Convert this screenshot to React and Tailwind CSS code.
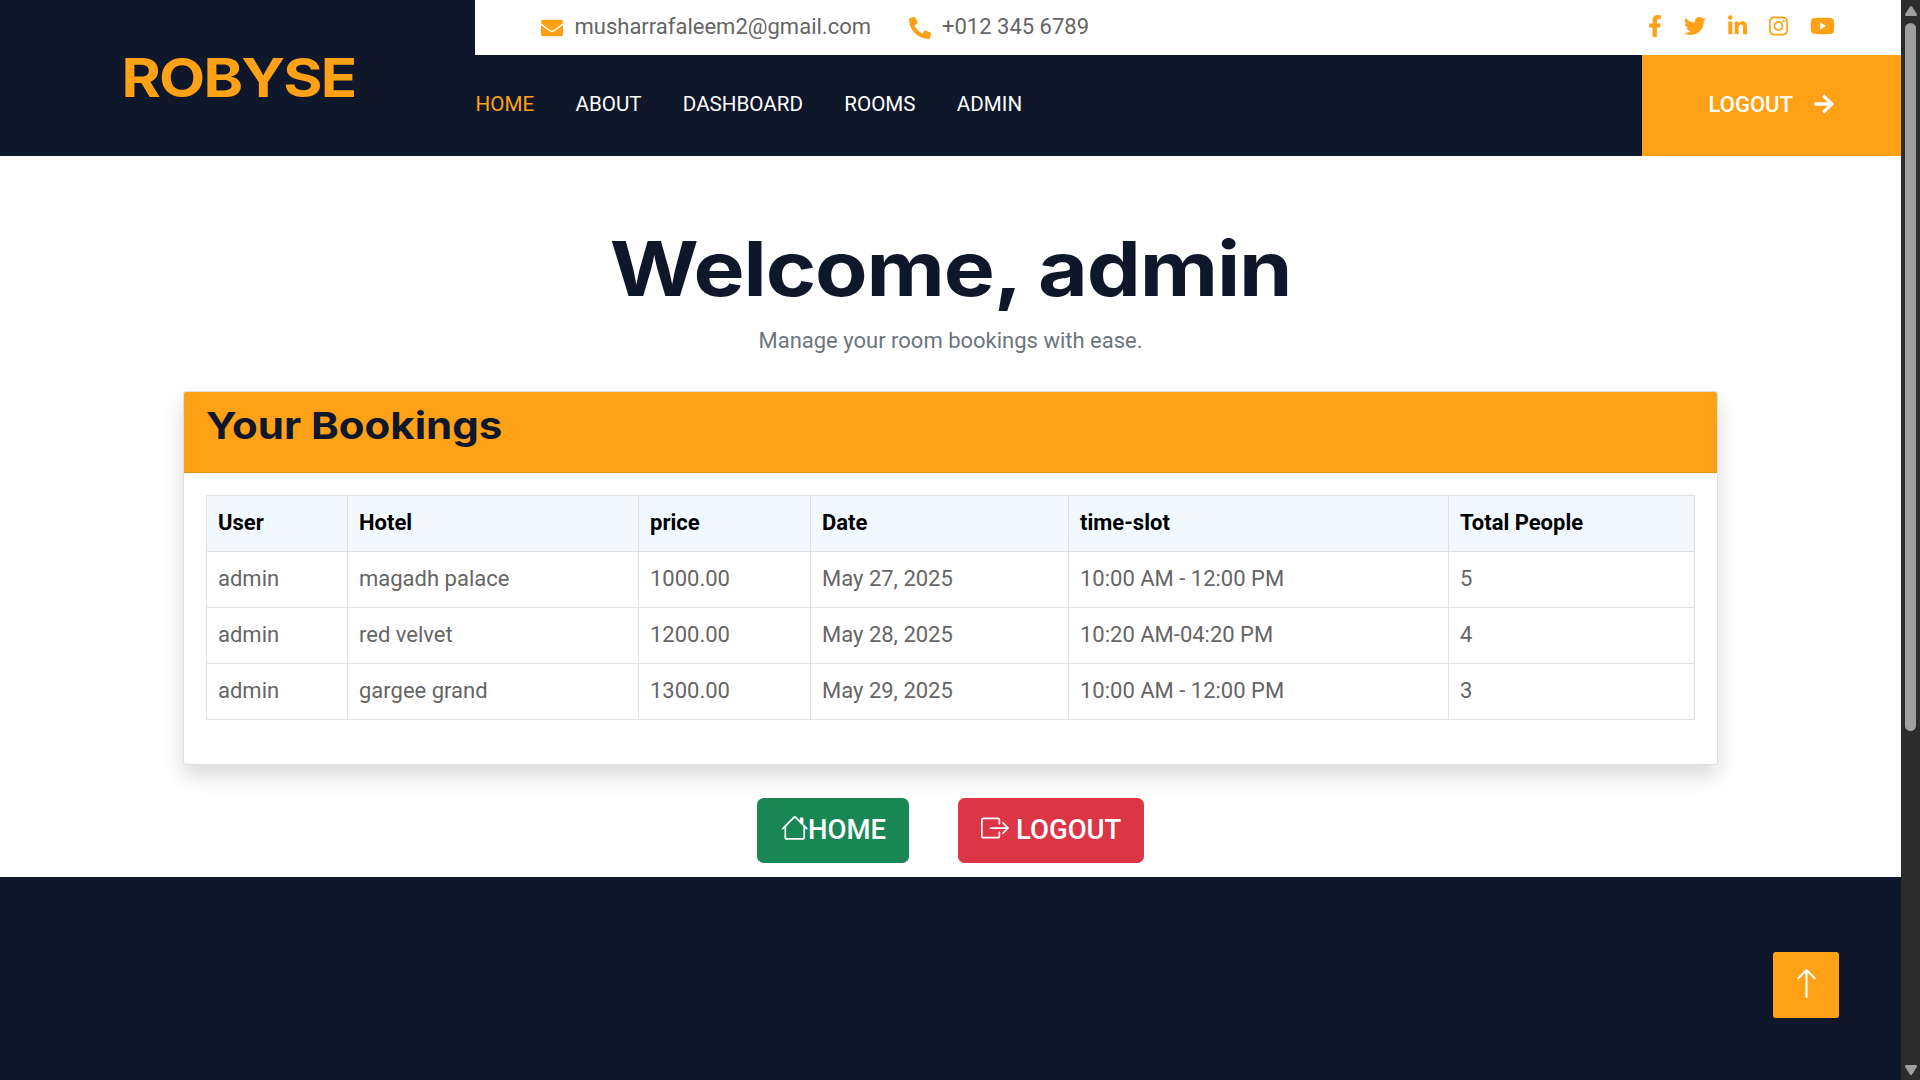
import React from "react";
import { FaEnvelope, FaPhoneAlt, FaFacebookF, FaTwitter, FaLinkedinIn, FaInstagram, FaYoutube } from "react-icons/fa";
import { FaArrowRight } from "react-icons/fa";
import { BsArrowUp, BsBoxArrowRight } from "react-icons/bs";

const nav = ["HOME", "ABOUT", "DASHBOARD", "ROOMS", "ADMIN"];

const columns = ["User", "Hotel", "price", "Date", "time-slot", "Total People"];

const bookings = [
  ["admin", "magadh palace", "1000.00", "May 27, 2025", "10:00 AM - 12:00 PM", "5"],
  ["admin", "red velvet", "1200.00", "May 28, 2025", "10:20 AM-04:20 PM", "4"],
  ["admin", "gargee grand", "1300.00", "May 29, 2025", "10:00 AM - 12:00 PM", "3"],
];

function HouseIcon() {
  return (
    <svg viewBox="0 0 16 16" className="mb-[3px] h-[27.5px] w-[27.5px]" fill="currentColor">
      <path fillRule="evenodd" d="M2 13.5V7h1v6.5a.5.5 0 0 0 .5.5h9a.5.5 0 0 0 .5-.5V7h1v6.5a1.5 1.5 0 0 1-1.5 1.5h-9A1.5 1.5 0 0 1 2 13.5zm11-11V6l-2-2V2.5a.5.5 0 0 1 .5-.5h1a.5.5 0 0 1 .5.5z" />
      <path fillRule="evenodd" d="M7.293 1.5a1 1 0 0 1 1.414 0l6.647 6.646a.5.5 0 0 1-.708.708L8 2.207 1.354 8.854a.5.5 0 1 1-.708-.708L7.293 1.5z" />
    </svg>
  );
}

function Header() {
  return (
    <header className="flex h-[156px] bg-[#0f172b]">
      <div className="flex w-[475px] items-center justify-center">
        <h1 className="origin-center scale-x-[1.11] pl-[1px] text-[54px] leading-[64px] font-bold tracking-[-1.6px] text-[#fea116] font-['Inter',sans-serif]">ROBYSE</h1>
      </div>
      <div className="flex flex-1 flex-col">
        <div className="flex h-[55px] items-center bg-white pr-[66px] pb-[2px] pl-[66px]">
          <div className="flex items-center">
            <FaEnvelope className="mt-[2px] mr-[11.5px] size-[22px] text-[#fea116]" />
            <span className="leading-[33px]">musharrafaleem2@gmail.com</span>
          </div>
          <div className="ml-[38px] flex items-center">
            <FaPhoneAlt className="mt-[2px] mr-[11px] size-[22px] text-[#fea116]" />
            <span className="leading-[33px]">+012 345 6789</span>
          </div>
          <div className="ml-auto flex items-center gap-[22px] pb-[1px] text-[#fea116]">
            <FaFacebookF className="h-[22px] w-[14px]" />
            <FaTwitter className="size-[22px]" />
            <FaLinkedinIn className="h-[22px] w-[19px]" />
            <FaInstagram className="h-[22px] w-[19px]" />
            <FaYoutube className="h-[22px] w-[25px]" />
          </div>
        </div>
        <div className="flex h-[101px]">
          <nav className="flex flex-1 items-center gap-[41.25px] pb-[2px] pl-[0.6px] text-[20.625px] text-white">
            {nav.map((n, i) => (
              <a key={n} className={i === 0 ? "text-[#fea116]" : ""}>{n}</a>
            ))}
          </nav>
          <a className="flex w-[259px] items-center bg-[#fea116] pb-[2px] pl-[66.6px] font-medium text-white">
            <span>LOGOUT</span>
            <FaArrowRight className="mb-[2px] ml-[21.5px] h-[22px] w-[20px]" />
          </a>
        </div>
      </div>
    </header>
  );
}

function BookingsCard() {
  return (
    <section className="w-[1535px] rounded-[3px] border border-[#dfdfdf] bg-white shadow-[0_11px_22px_rgba(0,0,0,0.15)]">
      <div className="h-[81px] rounded-t-[2px] border-b border-[#df9218] bg-[#fea116] px-[22px] pt-[11px]">
        <h2 className="w-max origin-left scale-x-[1.12] text-[37.5px] leading-[46px] font-bold text-[#0f172b] font-['Inter',sans-serif]">Your Bookings</h2>
      </div>
      <div className="px-[22px] pt-[22px] pb-[44px]">
        <table className="w-full table-fixed border-collapse text-left">
          <colgroup>
            <col className="w-[141px]" />
            <col className="w-[291px]" />
            <col className="w-[172px]" />
            <col className="w-[258px]" />
            <col className="w-[380px]" />
            <col />
          </colgroup>
          <thead>
            <tr className="h-[56px] bg-[#f1f8ff] text-black">
              {columns.map((c) => (
                <th key={c} className="border border-[#dee2e6] px-[11px] pt-0 pb-[2px] font-bold">{c}</th>
              ))}
            </tr>
          </thead>
          <tbody>
            {bookings.map((row, r) => (
              <tr key={r} className="h-[56px]">
                {row.map((cell, c) => (
                  <td key={c} className="border border-[#dee2e6] px-[11px] pt-0 pb-[2px]">{cell}</td>
                ))}
              </tr>
            ))}
          </tbody>
        </table>
      </div>
    </section>
  );
}

function Scrollbar() {
  return (
    <div className="flex w-[19px] flex-col items-center bg-[#2c2c2c]">
      <svg viewBox="0 0 12 10" className="mt-[6px] h-[10px] w-[12px] shrink-0" fill="#9f9f9f">
        <path d="M5 .6Q6-.5 7 .6L11.8 8Q12.3 9.8 11 10H1Q-.3 9.8.2 8Z" />
      </svg>
      <div className="mt-[7px] h-[708px] w-[11px] rounded-full bg-[#9f9f9f]" />
      <svg viewBox="0 0 12 10" className="mt-auto mb-[5px] h-[10px] w-[12px] shrink-0" fill="#9f9f9f">
        <path d="M5 9.4Q6 10.5 7 9.4L11.8 2Q12.3.2 11 0H1Q-.3.2.2 2Z" />
      </svg>
    </div>
  );
}

export default function App() {
  return (
    <div className="flex h-[1080px] w-[1920px] overflow-hidden bg-white font-['Roboto',sans-serif] text-[22px] leading-[33px] text-[#666565]">
      <div className="flex w-[1901px] flex-col">
        <Header />
        <main className="flex h-[721px] flex-col items-center">
          <h1 className="mt-[66px] scale-x-[1.13] text-[76px] leading-[92px] font-bold tracking-[-1px] text-[#0f172b] font-['Inter',sans-serif]">Welcome, admin</h1>
          <p className="mt-[10px] mb-[34px] text-[#6c757d]">Manage your room bookings with ease.</p>
          <BookingsCard />
          <div className="mt-[33px] flex gap-[49px] text-[27.5px] font-medium text-white">
            <a className="flex h-[65px] w-[152px] items-center rounded-[6.6px] bg-[#198754] pb-[2px] pl-[23.5px]">
              <HouseIcon />
              <span>HOME</span>
            </a>
            <a className="flex h-[65px] w-[186px] items-center rounded-[6.6px] bg-[#dc3545] pb-[2px] pl-[23px]">
              <BsBoxArrowRight className="mb-[3px] size-[28px]" />
              <span className="ml-[7px]">LOGOUT</span>
            </a>
          </div>
        </main>
        <footer className="flex flex-1 items-start justify-end bg-[#0f172b] pt-[75px] pr-[62px]">
          <a className="flex size-[66px] items-center justify-center rounded-[2.75px] bg-[#fea116] pb-[4px] text-white">
            <BsArrowUp className="size-[33px]" />
          </a>
        </footer>
      </div>
      <Scrollbar />
    </div>
  );
}
